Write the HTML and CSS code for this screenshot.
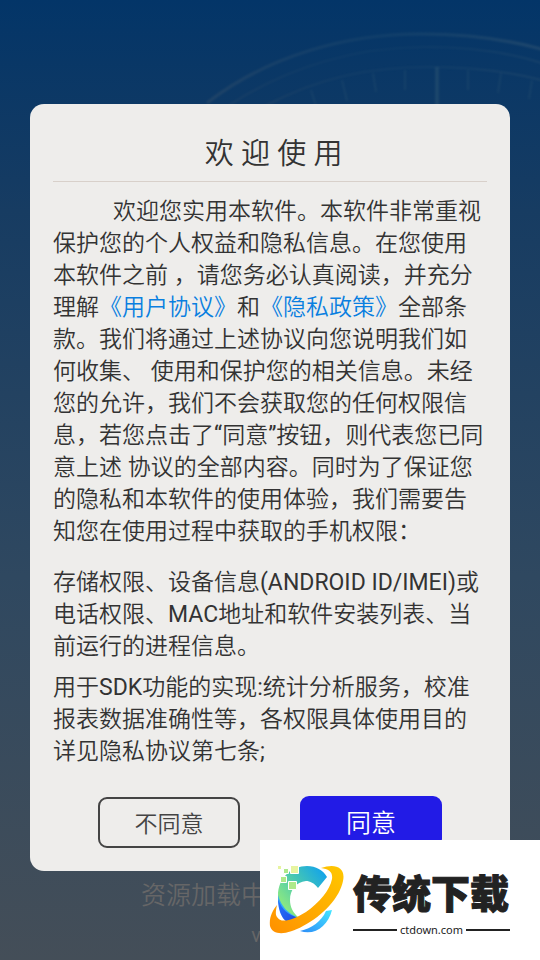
FILE: index.html
```
<!DOCTYPE html>
<html lang="zh-CN">
<head>
<meta charset="utf-8">
<meta name="viewport" content="width=device-width, initial-scale=1">
<title>欢迎使用</title>
<link rel="stylesheet" href="styles.css">
</head>
<body>
<svg class="dial" viewBox="0 0 540 200" preserveAspectRatio="xMaxYMin slice" aria-hidden="true">
  <defs>
    <linearGradient id="rim" x1="0" x2="1" y1="0" y2="0">
      <stop offset="0" stop-color="#5d6770" stop-opacity=".4"/>
      <stop offset=".5" stop-color="#4f6f80" stop-opacity=".25"/>
      <stop offset="1" stop-color="#6c7f83" stop-opacity=".4"/>
    </linearGradient>
  </defs>
  <g fill="none" stroke="url(#rim)">
    <path class="soft" stroke-width="3" d="M207 103C270 54 350 34 420 34C465 34 510 40 545 50"/>
    <path class="soft" stroke-width="2" opacity=".6" d="M228 106C290 65 360 47 425 47C475 47 515 54 545 64"/>
    <path class="soft" stroke-width="2" opacity=".7" d="M265 106C320 77 370 67 430 67C475 67 515 73 545 81"/>
  </g>
  <g class="soft" stroke="#4f7280" stroke-opacity=".25" stroke-width="2">
    <path stroke-width="4" stroke-opacity=".4" d="M437 67V106"/>
    <path d="M405 70V90M373 73L376 92M342 80L347 101M311 90L316 106M468 70V90M501 73L498 93M532 80L529 99"/>
  </g>
</svg>
<main class="screen">
  <section class="dialog" role="dialog" aria-labelledby="title">
    <h1 class="title" id="title">&nbsp;欢 迎 使 用</h1>
    <p class="intro">欢迎您实用本软件。本软件非常重视保护您的个人权益和隐私信息。在您使用本软件之前 ，请您务必认真阅读，并充分理解<a href="#terms">《用户协议》</a>和<a href="#privacy">《隐私政策》</a>全部条款。我们将通过上述协议向您说明我们如何收集、 使用和保护您的相关信息。未经您的允许，我们不会获取您的任何权限信息，若您点击了“同意”按钮，则代表您已同意上述 协议的全部内容。同时为了保证您的隐私和本软件的使用体验，我们需要告知您在使用过程中获取的手机权限：</p>
    <p class="detail detail-first">存储权限、设备信息(ANDROID ID/IMEI)或电话权限、MAC地址和软件安装列表、当前运行的进程信息。</p>
    <p class="detail">用于SDK功能的实现:统计分析服务，校准报表数据准确性等，各权限具体使用目的详见隐私协议第七条;</p>
    <div class="actions">
      <button class="button decline" type="button">不同意</button>
      <button class="button accept" type="button">同意</button>
    </div>
  </section>
  <footer class="status">
    <p class="loading">资源加载中</p>
    <p class="version">v1.0</p>
  </footer>
</main>
<aside class="brand">
  <svg class="brand-mark" viewBox="0 0 76 72" aria-hidden="true">
    <defs>
      <linearGradient id="ring" x1="1" y1="0" x2="0" y2="1">
        <stop offset="0" stop-color="#ffc800"/><stop offset="1" stop-color="#ff9000"/>
      </linearGradient>
      <linearGradient id="arc" x1="0" y1=".8" x2="1" y2="0">
        <stop offset="0" stop-color="#98ef78"/><stop offset=".5" stop-color="#45c6b4"/><stop offset="1" stop-color="#099df5"/>
      </linearGradient>
      <linearGradient id="base" x1="0" y1="0" x2="1" y2="1">
        <stop offset="0" stop-color="#2478ff"/><stop offset="1" stop-color="#2047e0"/>
      </linearGradient>
      <linearGradient id="tail" x1="0" y1="1" x2="1" y2="0">
        <stop offset="0" stop-color="#2c8cf8"/><stop offset="1" stop-color="#45e6ff"/>
      </linearGradient>
    </defs>
    <path fill="url(#arc)" d="M58 13L49 24C45 19 41 17 37 17C27 18 21 26 21 36C21 43 24 49 30 54C15 54 9 43 9 32C9 13 23 2 38 2C47 2 54 6 58 13Z"/>
    <path fill="#32a9f8" d="M9 31C12 42 19 50 30 54L25 57C13 54 9 44 9 31Z"/>
    <path fill="url(#base)" d="M9 35C13 46 19 51 30 54L18 58C12 54 9 45 9 35Z"/>
    <path fill="url(#tail)" d="M31 67C43 64 52 58 57 47L63 46C59 62 46 72 31 67Z"/>
    <path fill="url(#ring)" d="M52 4C66-1 77 3 74 17C71 33 54 52 34 62C18 71 4 72 1 62C0 54 3 47 8 41C7 46 6 50 8 53C12 60 24 56 37 48C50 39 61 26 63 15C64 8 60 5 52 4Z"/>
    <g stroke="#fff">
      <path fill="#e7f4a0" d="M21.500 1.500h8v8h-8z"/>
      <path fill="#aee98b" d="M14.500 4.500h5v5h-5zM11.500 12.500h6v6h-6zM19.500 17.500h8v8h-8z"/>
      <path fill="#e7f4a0" d="M8.500 1.500h4v4h-4z"/>
    </g>
  </svg>
  <div class="brand-text">
    <strong class="brand-name">传统下载</strong>
    <span class="brand-site">ctdown.com</span>
  </div>
</aside>
</body>
</html>
```

FILE: styles.css
```
* {
  box-sizing: border-box;
}

body {
  margin: 0;
  min-height: 100vh;
  background: linear-gradient(#033568, #173c62 22%, #2f4860 60%, #444e58);
  color: #333;
  font-family: Roboto, "Noto Sans CJK SC DemiLight", "Noto Sans CJK SC Light", "Noto Sans CJK SC", sans-serif;
}

h1,
p {
  margin: 0;
}

/* Faint instrument dial behind the dialog */
.dial {
  position: absolute;
  top: 0;
  left: 0;
  width: 100%;
  height: 200px;
  opacity: 0.6;
}

.soft {
  filter: blur(1px);
}

.screen {
  position: relative;
  padding: 104px 30px 0;
}

.dialog {
  padding: 26px 23px 23px;
  border-radius: 14px;
  background: #eeedeb;
}

.title {
  padding-bottom: 2px;
  border-bottom: 1px solid #d8d0ca;
  font-size: 29px;
  font-weight: 400;
  line-height: 49px;
  text-align: center;
}

.intro {
  margin-top: 14px;
  font-size: 23px;
  line-height: 32px;
  text-indent: 60px;
}

.intro a {
  color: #0a7fe0;
  text-decoration: none;
}

.detail {
  margin-top: 9px;
  font-size: 23px;
  line-height: 32px;
}

.detail-first {
  margin-top: 19px;
}

.actions {
  display: flex;
  align-items: flex-end;
  justify-content: space-between;
  margin-top: 28px;
  padding: 0 45px;
}

.button {
  width: 142px;
  height: 52px;
  padding: 0 0 2px;
  border: 0;
  border-radius: 9px;
  font-family: inherit;
}

.decline {
  height: 51px;
  border: 2px solid #444;
  background: transparent;
  color: #444;
  font-size: 23px;
}

.accept {
  background: #221be6;
  color: #fff;
  font-size: 25px;
}

.status {
  padding-top: 6px;
  color: #666667;
  text-align: center;
}

.loading {
  padding-left: 111px;
  font-size: 25px;
  line-height: 38px;
  text-align: left;
}

.version {
  margin-top: 8px;
  font-size: 20px;
  line-height: 24px;
}

/* Site badge pinned over the lower right corner */
.brand {
  position: fixed;
  right: 0;
  bottom: 0;
  display: flex;
  align-items: center;
  gap: 8px;
  width: 280px;
  height: 120px;
  padding: 0 30px 0 9px;
  background: #fff;
  color: #222;
}

.brand-mark {
  flex: none;
  width: 76px;
  height: 72px;
}

.brand-text {
  flex: 1;
}

.brand-name {
  display: block;
  font-family: "Noto Sans CJK SC", sans-serif;
  font-size: 39px;
  font-weight: 900;
  line-height: 58px;
  white-space: nowrap;
  -webkit-text-stroke: 1px #222;
}

.brand-site {
  display: flex;
  align-items: center;
  gap: 3px;
  padding-top: 2px;
  font-family: "Noto Sans", sans-serif;
  font-size: 11px;
  line-height: 16px;
}

.brand-site::before,
.brand-site::after {
  content: "";
  flex: 1;
  height: 2px;
  background: #222;
}
```
